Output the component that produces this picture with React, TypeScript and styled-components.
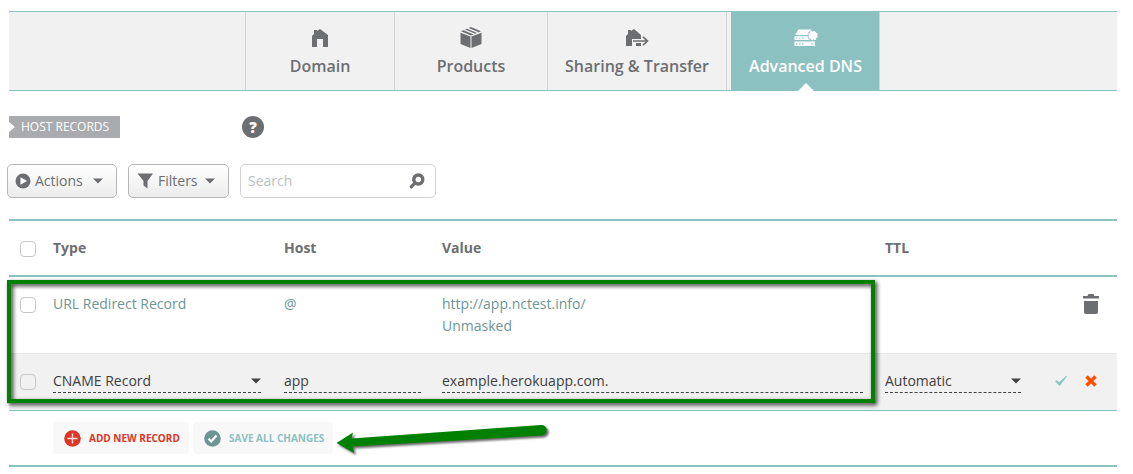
import React from "react";
import styled, { createGlobalStyle } from "styled-components";

const teal = "#8bc1c0";
const grey = "#6d6e71";

const GlobalStyle = createGlobalStyle`
  *, *::before, *::after { box-sizing: border-box; }
  body { margin: 0; background: #fff; }
  body, button, input, select {
    font-family: "Open Sans", "Noto Sans", sans-serif;
    font-size: 14px;
    line-height: 22px;
    color: ${grey};
  }
`;

const Page = styled.main`
  padding: 11px 16px 7px 9px;
`;

const Tabs = styled.nav`
  display: flex;
  justify-content: center;
  height: 80px;
  background: #f1f1f1;
  border-top: 1px solid ${teal};
  border-bottom: 1px solid ${teal};
`;

const Tab = styled.a<{ $width: number; $active?: boolean }>`
  position: relative;
  flex: 0 0 ${(p) => p.$width}px;
  display: flex;
  flex-direction: column;
  align-items: center;
  gap: 5px;
  padding-top: 14px;
  border-left: 1px solid ${(p) => (p.$active ? teal : "#d4d5d6")};
  background: ${(p) => (p.$active ? teal : "transparent")};
  color: ${(p) => (p.$active ? "#fff" : grey)};
  font-size: 16px;
  font-weight: 600;
  text-decoration: none;
  white-space: nowrap;
  &::after {
    content: "";
    display: ${(p) => (p.$active ? "block" : "none")};
    position: absolute;
    bottom: -1px;
    left: 50%;
    margin-left: -8px;
    border: 8px solid transparent;
    border-top-width: 0;
    border-bottom-color: #fff;
  }
`;

const TabDivider = styled.span`
  flex: 0 0 5px;
  border-left: 1px solid #d4d5d6;
`;

const TabEnd = styled(TabDivider)`
  flex-basis: 2px;
`;

const TitleRow = styled.div`
  display: flex;
  align-items: center;
  gap: 122px;
  margin-top: 25px;
`;

const Tag = styled.h2`
  margin: 0;
  width: 111px;
  height: 22px;
  padding-left: 12px;
  background: #a9abae;
  clip-path: polygon(0 0, 100% 0, 100% 100%, 0 100%, 0 16px, 6px 11px, 0 6px);
  color: #fff;
  font-size: 12px;
  font-weight: 400;
  line-height: 22px;
  white-space: nowrap;
`;

const HelpButton = styled.button`
  width: 22px;
  height: 22px;
  padding: 0;
  border: 0;
  border-radius: 50%;
  background: ${grey};
  color: #fff;
  font-size: 15px;
  font-weight: 800;
`;

const Toolbar = styled.div`
  display: flex;
  gap: 11px;
  margin: 26px 0 0 -2px;
`;

const ToolButton = styled.button<{ $width: number }>`
  display: flex;
  align-items: center;
  width: ${(p) => p.$width}px;
  height: 34px;
  padding: 0 13px 0 7px;
  gap: 4px;
  border: 1px solid #b5b6b8;
  border-radius: 5px;
  background: linear-gradient(#fff, #ececec);
  svg:last-child { margin-left: auto; }
`;

const SearchBox = styled.label`
  display: flex;
  align-items: center;
  width: 196px;
  height: 34px;
  padding: 0 10px 0 7px;
  border: 1px solid #d0d1d2;
  border-radius: 5px;
`;

const SearchInput = styled.input`
  flex: 1;
  min-width: 0;
  padding: 0;
  border: 0;
  outline: 0;
  background: none;
  &::placeholder { color: #bcbec0; opacity: 1; }
`;

const Records = styled.section`
  position: relative;
  margin-top: 21px;
`;

const Table = styled.table`
  width: 100%;
  table-layout: fixed;
  border-collapse: separate;
  border-spacing: 0;
  border-top: 2px solid ${teal};
`;

const Col = styled.col<{ $width?: number }>`
  width: ${(p) => (p.$width ? `${p.$width}px` : "auto")};
`;

const HeadCell = styled.th`
  height: 56px;
  padding: 0 0 0 1px;
  border-bottom: 2px solid ${teal};
  text-align: left;
  font-weight: 700;
`;

const Row = styled.tr<{ $editing?: boolean }>`
  background: ${(p) => (p.$editing ? "#f1f1f1" : "#fff")};
  td {
    height: ${(p) => (p.$editing ? 57 : 76)}px;
    padding: 16px 0 0 1px;
    border-top: ${(p) => (p.$editing ? "1px solid #e4e5e6" : "0")};
    vertical-align: top;
    color: #6d9594;
  }
`;

const Checkbox = styled.input`
  appearance: none;
  display: block;
  width: 16px;
  height: 16px;
  margin: 4px 0 0 10px;
  border: 1px solid #c6c7c9;
  border-radius: 4px;
  th & { margin-top: 2px; }
`;

const Field = styled.div<{ $end: number }>`
  position: relative;
  margin-right: ${(p) => p.$end}px;
  border-bottom: 1px dashed #414042;
  svg {
    position: absolute;
    right: 0;
    top: 8px;
    pointer-events: none;
  }
`;

const TextInput = styled.input`
  display: block;
  width: 100%;
  height: 22px;
  padding: 0;
  border: 0;
  outline: 0;
  background: none;
  color: #414042;
`;

const Select = styled.select`
  display: block;
  appearance: none;
  width: 100%;
  height: 22px;
  padding: 0;
  border: 0;
  outline: 0;
  background: none;
  color: #414042;
`;

const RowActions = styled.div`
  display: flex;
  justify-content: flex-end;
  gap: 12px;
  padding-right: 17px;
`;

const IconButton = styled.button`
  display: flex;
  align-items: center;
  justify-content: center;
  width: 18px;
  height: 22px;
  padding: 0;
  border: 0;
  background: none;
`;

const Footer = styled.div`
  position: relative;
  display: flex;
  gap: 4px;
  height: 57px;
  padding: 11px 0 0 44px;
  border-top: 1px solid ${teal};
  border-bottom: 2px solid ${teal};
`;

const FooterButton = styled.button<{ $width: number; $color: string }>`
  display: flex;
  align-items: center;
  gap: 8px;
  width: ${(p) => p.$width}px;
  height: 32px;
  padding: 0 0 0 11px;
  border: 0;
  border-radius: 4px;
  background: #f8f8f8;
  color: ${(p) => p.$color};
  font-size: 10px;
  font-weight: 700;
  white-space: nowrap;
`;

const Highlight = styled.div`
  position: absolute;
  top: 61px;
  bottom: 64px;
  left: -2px;
  right: 242px;
  border: 4px solid #008000;
  filter: drop-shadow(2px 2px 2px rgba(0, 0, 0, 0.8));
  pointer-events: none;
`;

const Arrow = styled.svg`
  position: absolute;
  left: 322px;
  top: 9px;
  filter: drop-shadow(2px 2px 1px rgba(0, 0, 0, 0.6));
  pointer-events: none;
`;

const Caret = ({ color = grey }: { color?: string }) => (
  <svg width="10" height="6" viewBox="0 0 10 6" aria-hidden="true">
    <path d="M0 .5h10L5 5.5z" fill={color} />
  </svg>
);

const HouseIcon = () => (
  <svg width="16" height="24" viewBox="0 0 16 24" aria-hidden="true">
    <path d="M0 10 2 8V4h3v1l3-2 8 6v12h-5v-8H5v8H0z" fill={grey} />
  </svg>
);

const BoxIcon = () => (
  <svg width="22" height="24" viewBox="0 0 22 24" aria-hidden="true">
    <path d="M.5 6.800 10.500 10.600V22L.5 18z M21.500 6.800 11.500 10.600V22l10-4z" fill={grey} />
    <path d="M11 1 21 5.200 11 9.400 1 5.200z" fill={grey} />
    <path d="M7.300 2.200 18 6.700M3.800 3.700 14.500 8.200" stroke="#f1f1f1" strokeWidth="1.300" />
  </svg>
);

const TransferIcon = () => (
  <svg width="24" height="24" viewBox="0 0 24 24" aria-hidden="true">
    <path d="M1 10 3 8V4h3v1l3-2 7 6v4H7v7H1z M11 17h5v3h-5z" fill={grey} />
    <path d="M8 15h14M18 10.800l4.500 4.200-4.500 4.200" fill="none" stroke={grey} strokeWidth="1.700" />
  </svg>
);

const ServerIcon = () => (
  <svg width="24" height="24" viewBox="0 0 24 24" aria-hidden="true">
    <path d="M4.500 3.500h13V9H1z M.5 10h20.500v4H.5z M.5 15.500h20.500V20H.5z" fill="#fff" />
    <circle cx="19" cy="9.500" r="5.500" fill={teal} />
    <circle cx="19" cy="9.500" r="4" fill="#fff" />
    <circle cx="19" cy="9.500" r="4.200" fill="none" stroke="#fff" strokeWidth="1.300" strokeDasharray="1.900 1.400" />
    <path d="M2 12h9M2 17.800h9" stroke={teal} strokeWidth="1.200" strokeDasharray="1.500 1.500" />
    <path d="M17 17.800h2" stroke={teal} strokeWidth="1" />
  </svg>
);

const PlayIcon = () => (
  <svg width="16" height="16" viewBox="0 0 16 16" aria-hidden="true">
    <circle cx="8" cy="8" r="7.500" fill={grey} />
    <path d="M5.500 4.200v7.600L12 8z" fill="#fff" />
  </svg>
);

const FunnelIcon = () => (
  <svg width="18" height="16" viewBox="0 0 18 16" aria-hidden="true">
    <path d="M1.500 .5h15.500l-5.500 7.500v7.500l-4-3V8z" fill={grey} />
  </svg>
);

const SearchIcon = () => (
  <svg width="16" height="16" viewBox="0 0 16 16" aria-hidden="true">
    <circle cx="9.300" cy="6.500" r="4.500" fill="none" stroke={grey} strokeWidth="3.400" />
    <path d="M6 10 2.300 13.800" stroke={grey} strokeWidth="3.200" strokeLinecap="round" />
  </svg>
);

const TrashIcon = () => (
  <svg width="16" height="20" viewBox="0 0 16 20" aria-hidden="true">
    <path d="M0 2h4.500L5.500 0h5l1 2H16v2.500H0z M1 7h14v11a2 2 0 0 1-2 2H3a2 2 0 0 1-2-2z" fill={grey} />
  </svg>
);

const CheckIcon = () => (
  <svg width="14" height="12" viewBox="0 0 14 12" aria-hidden="true">
    <path d="M1 6.300 2.500 5.300 5.200 7.300 12 1l1 .3L5.600 11z" fill={teal} />
  </svg>
);

const CrossIcon = () => (
  <svg width="12" height="12" viewBox="0 0 12 12" aria-hidden="true">
    <path d="M1.500 1.500l9 9M10.500 1.500l-9 9" stroke="#ff5000" strokeWidth="3.400" />
  </svg>
);

const AddIcon = () => (
  <svg width="17" height="17" viewBox="0 0 17 17" aria-hidden="true">
    <circle cx="8.500" cy="8.500" r="8.300" fill="#dc3626" />
    <path d="M3.500 8.500h10M8.500 3.500v10" stroke="#fbdcd8" strokeWidth="1.500" />
  </svg>
);

const SaveIcon = () => (
  <svg width="17" height="17" viewBox="0 0 17 17" aria-hidden="true">
    <circle cx="8.500" cy="8.500" r="8.300" fill="#6d9594" />
    <path d="M4.500 8.800 7.200 11.400 12.500 5.500" fill="none" stroke="#fff" strokeWidth="2.200" />
  </svg>
);

export default function App() {
  return (
    <>
      <GlobalStyle />
      <Page>
        <Tabs aria-label="Domain settings">
          <Tab href="#domain" $width={149}><HouseIcon />Domain</Tab>
          <Tab href="#products" $width={153}><BoxIcon />Products</Tab>
          <Tab href="#sharing" $width={179}><TransferIcon />Sharing &amp; Transfer</Tab>
          <TabDivider />
          <Tab href="#dns" $width={148} $active aria-current="page"><ServerIcon />Advanced DNS</Tab>
          <TabEnd />
        </Tabs>

        <TitleRow>
          <Tag>HOST RECORDS</Tag>
          <HelpButton type="button" aria-label="Help">?</HelpButton>
        </TitleRow>

        <Toolbar>
          <ToolButton type="button" $width={110}><PlayIcon />Actions<Caret /></ToolButton>
          <ToolButton type="button" $width={101}><FunnelIcon />Filters<Caret /></ToolButton>
          <SearchBox>
            <SearchInput type="text" placeholder="Search" aria-label="Search" />
            <SearchIcon />
          </SearchBox>
        </Toolbar>

        <Records>
          <Table>
            <colgroup>
              <Col $width={43} />
              <Col $width={231} />
              <Col $width={158} />
              <Col />
              <Col $width={146} />
              <Col $width={87} />
            </colgroup>
            <thead>
              <tr>
                <HeadCell><Checkbox type="checkbox" aria-label="Select all records" /></HeadCell>
                <HeadCell scope="col">Type</HeadCell>
                <HeadCell scope="col">Host</HeadCell>
                <HeadCell scope="col">Value</HeadCell>
                <HeadCell scope="col">TTL</HeadCell>
                <HeadCell />
              </tr>
            </thead>
            <tbody>
              <Row>
                <td><Checkbox type="checkbox" aria-label="Select URL Redirect Record" /></td>
                <td>URL Redirect Record</td>
                <td>@</td>
                <td>http://app.nctest.info/<br />Unmasked</td>
                <td />
                <td>
                  <RowActions>
                    <IconButton type="button" aria-label="Delete record"><TrashIcon /></IconButton>
                  </RowActions>
                </td>
              </Row>
              <Row $editing>
                <td><Checkbox type="checkbox" aria-label="Select CNAME Record" /></td>
                <td>
                  <Field $end={22}>
                    <Select aria-label="Type"><option>CNAME Record</option></Select>
                    <Caret color="#414042" />
                  </Field>
                </td>
                <td>
                  <Field $end={20}><TextInput type="text" aria-label="Host" defaultValue="app" /></Field>
                </td>
                <td>
                  <Field $end={21}><TextInput type="text" aria-label="Value" defaultValue="example.herokuapp.com." /></Field>
                </td>
                <td>
                  <Field $end={9}>
                    <Select aria-label="TTL"><option>Automatic</option></Select>
                    <Caret color="#414042" />
                  </Field>
                </td>
                <td>
                  <RowActions>
                    <IconButton type="button" aria-label="Save record"><CheckIcon /></IconButton>
                    <IconButton type="button" aria-label="Discard record"><CrossIcon /></IconButton>
                  </RowActions>
                </td>
              </Row>
            </tbody>
          </Table>
          <Footer>
            <FooterButton type="button" $width={136} $color="#dc3626"><AddIcon />ADD NEW RECORD</FooterButton>
            <FooterButton type="button" $width={140} $color={teal}><SaveIcon />SAVE ALL CHANGES</FooterButton>
            <Arrow width="224" height="40" viewBox="0 0 224 40" aria-hidden="true">
              <path d="M5.500 23 22 12.500 20.500 18.500 210 5a5 5 0 0 1 1 10.500L21.500 26.500 23 33z" fill="#008000" />
            </Arrow>
          </Footer>
          <Highlight />
        </Records>
      </Page>
    </>
  );
}
